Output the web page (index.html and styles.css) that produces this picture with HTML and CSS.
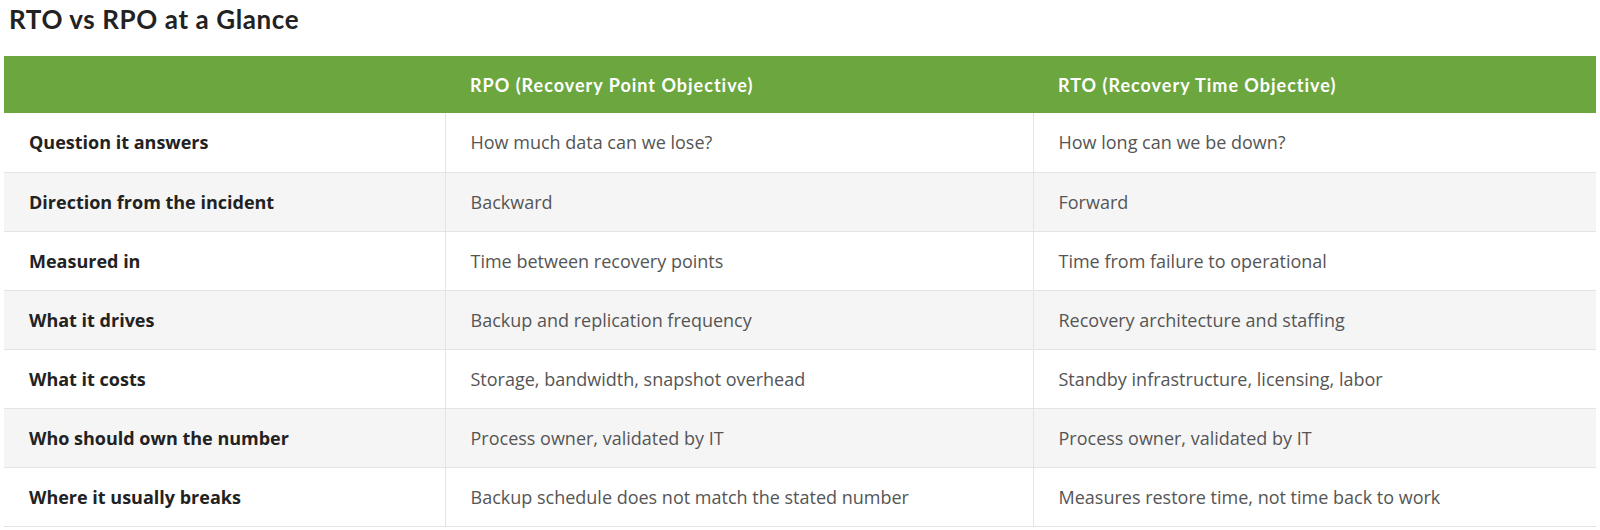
FILE: index.html
```html
<!DOCTYPE html>
<html lang="en">
<head>
<meta charset="utf-8">
<title>RTO vs RPO at a Glance</title>
<link rel="stylesheet" href="styles.css">
</head>
<body>
<section class="glance">
  <h2 class="glance-title">RTO vs RPO at a Glance</h2>
  <table class="compare">
    <thead>
      <tr>
        <th class="col-label"></th>
        <th class="col-rpo">RPO (Recovery Point Objective)</th>
        <th class="col-rto">RTO (Recovery Time Objective)</th>
      </tr>
    </thead>
    <tbody>
      <tr><td class="label">Question it answers</td><td>How much data can we lose?</td><td>How long can we be down?</td></tr>
      <tr><td class="label">Direction from the incident</td><td>Backward</td><td>Forward</td></tr>
      <tr><td class="label">Measured in</td><td>Time between recovery points</td><td>Time from failure to operational</td></tr>
      <tr><td class="label">What it drives</td><td>Backup and replication frequency</td><td>Recovery architecture and staffing</td></tr>
      <tr><td class="label">What it costs</td><td>Storage, bandwidth, snapshot overhead</td><td>Standby infrastructure, licensing, labor</td></tr>
      <tr><td class="label">Who should own the number</td><td>Process owner, validated by IT</td><td>Process owner, validated by IT</td></tr>
      <tr><td class="label">Where it usually breaks</td><td>Backup schedule does not match the stated number</td><td>Measures restore time, not time back to work</td></tr>
    </tbody>
  </table>
</section>
</body>
</html>
```

FILE: styles.css
```css
html, body {
  margin: 0;
  padding: 0;
  background: #ffffff;
}

.glance {
  padding: 0 4px;
}

.glance-title {
  margin: 0;
  padding: 3px 0 0 5px;
  height: 56px;
  box-sizing: border-box;
  font-family: "Lato", "Open Sans", sans-serif;
  font-weight: 700;
  font-size: 26px;
  line-height: 32px;
  color: #222222;
  letter-spacing: 0.6px;
}

.compare {
  width: 100%;
  border-collapse: collapse;
  font-family: "Open Sans", sans-serif;
  font-size: 18px;
}

.compare thead th {
  background: #6ca63f;
  color: #ffffff;
  font-family: "Lato", "Open Sans", sans-serif;
  font-weight: 700;
  font-size: 18px;
  letter-spacing: 1px;
  text-align: left;
  height: 57px;
  padding: 0 25px;
  box-sizing: border-box;
  vertical-align: middle;
}

.compare .col-label { width: 441px; }
.compare .col-rpo { width: 588px; }

.compare tbody td {
  height: 59px;
  padding: 0 25px;
  box-sizing: border-box;
  color: #555555;
  border-bottom: 1px solid #e4e4e4;
  vertical-align: middle;
}

.compare tbody td + td {
  border-left: 1px solid #e4e4e4;
}

.compare tbody tr:nth-child(even) td {
  background: #f5f5f5;
}

.compare tbody td.label {
  color: #222222;
  font-weight: 700;
}
```
